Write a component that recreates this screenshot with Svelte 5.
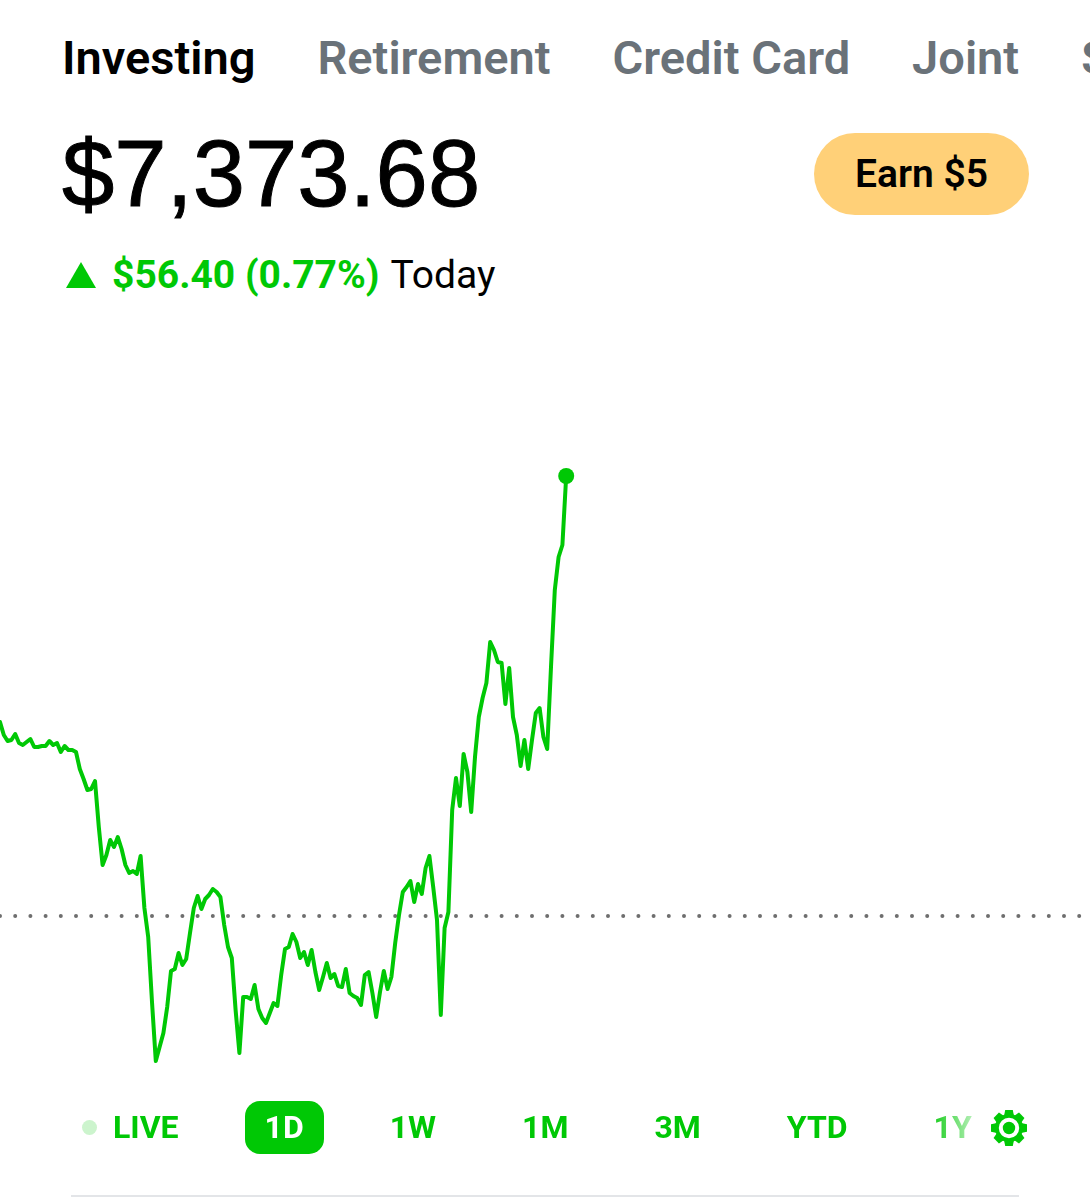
<script lang="ts">
  const accounts = ['Investing', 'Retirement', 'Credit Card', 'Joint', 'Savings'];
  const ranges = ['LIVE', '1D', '1W', '1M', '3M', 'YTD', '1Y'];

  let account = $state('Investing');
  let range = $state('1D');

  // one sample every STEP units, 0 is the top of the chart
  const STEP = 3.8;
  const samples = [
    292, 305, 311, 310, 304, 313, 315, 312, 309, 317, 317, 316, 316, 311, 315, 313, 322, 316, 320, 320,
    322, 339, 349, 360, 359, 351, 397, 435, 425, 410, 417, 407, 419, 435, 443, 441, 444, 426, 478, 507,
    572, 631, 617, 603, 577, 541, 539, 523, 535, 529, 503, 478, 466, 479, 469, 465, 459, 462, 467, 495,
    517, 528, 580, 623, 567, 567, 569, 555, 579, 588, 593, 583, 573, 576, 545, 519, 517, 504, 512, 528,
    522, 535, 520, 542, 560, 547, 533, 548, 544, 556, 557, 539, 563, 566, 568, 575, 545, 542, 563, 587,
    562, 541, 559, 547, 513, 485, 462, 457, 451, 472, 454, 464, 438, 426, 457, 490, 585, 498, 482, 380,
    348, 376, 324, 342, 382, 327, 287, 268, 253, 212, 220, 232, 233, 274, 238, 287, 305, 336, 310, 339,
    310, 283, 278, 307, 319, 237, 160, 127, 115, 46
  ];
  const previousClose = 486;

  const line = samples.map((y, i) => `${(i * STEP).toFixed(1)},${y}`).join(' ');
  const lastX = (samples.length - 1) * STEP;
  const lastY = samples[samples.length - 1];

  const teeth = [0, 45, 90, 135, 180, 225, 270, 315];
</script>

<main>
  <nav class="accounts" aria-label="Accounts">
    {#each accounts as name}
      <button class:current={name === account} onclick={() => (account = name)}>{name}</button>
    {/each}
  </nav>

  <header>
    <h1>$7,373.68</h1>
    <button class="earn">Earn $5</button>
  </header>

  <p class="change">
    <svg width="30" height="26" viewBox="0 0 30 26" aria-hidden="true">
      <path d="M15 0 L30 26 H0 Z" />
    </svg>
    <strong>$56.40 (0.77%)</strong>
    <span>Today</span>
  </p>

  <svg class="chart" viewBox="0 0 1090 640" role="img" aria-label="Portfolio value today">
    <line class="close" x1="0" y1={previousClose} x2="1090" y2={previousClose} />
    <polyline points={line} />
    <circle cx={lastX} cy={lastY} r="8" />
  </svg>

  <div class="toolbar">
    <div class="ranges">
      {#each ranges as name}
        <button class:selected={name === range} onclick={() => (range = name)}>
          {#if name === 'LIVE'}<i class="dot"></i>{/if}{name}
        </button>
      {/each}
    </div>
    <button class="settings" aria-label="Chart settings">
      <svg width="36" height="36" viewBox="-18 -18 36 36" aria-hidden="true">
        {#each teeth as angle}
          <path d="M-5 -12 L-3.8 -18 H3.8 L5 -12 Z" transform="rotate({angle})" />
        {/each}
        <circle r="14" />
        <circle class="ring" r="8.2" />
      </svg>
    </button>
  </div>

  <hr />
</main>

<style>
  :global(body) {
    margin: 0;
    background: #fff;
    color: #000;
    font-family: Roboto, "Liberation Sans", sans-serif;
  }

  main {
    overflow: hidden;
  }

  button {
    padding: 0;
    border: 0;
    background: none;
    color: inherit;
    font: inherit;
    white-space: nowrap;
    cursor: pointer;
  }

  .accounts {
    display: flex;
    gap: 62px;
    padding: 28px 0 0 62px;
    overflow: hidden;
  }

  .accounts button {
    flex: none;
    color: #6a7279;
    font-size: 47px;
    font-weight: 600;
    line-height: 60px;
  }

  .accounts .current {
    color: #000;
  }

  header {
    display: flex;
    align-items: center;
    justify-content: space-between;
    padding: 24px 61px 0 62px;
  }

  h1 {
    margin: 0;
    font-family: "Liberation Sans", Arial, sans-serif;
    font-size: 94px;
    font-weight: 400;
    line-height: 124px;
    -webkit-text-stroke: 1px currentColor;
  }

  .earn {
    padding: 0 41px;
    border-radius: 41px;
    background: #ffd078;
    font-size: 39px;
    font-weight: 600;
    line-height: 82px;
  }

  .change {
    display: flex;
    align-items: center;
    gap: 11px;
    margin: 14px 0 0;
    padding: 0 66px;
    font-size: 39px;
    line-height: 50px;
  }

  .change svg {
    margin-right: 5px;
    fill: #00c805;
  }

  .change strong {
    color: #00c805;
    font-weight: 700;
  }

  .chart {
    display: block;
    width: 100%;
    margin-top: 130px;
  }

  .chart polyline {
    fill: none;
    stroke: #00c805;
    stroke-width: 4;
    stroke-linecap: round;
    stroke-linejoin: round;
  }

  .chart circle {
    fill: #00c805;
  }

  .close {
    stroke: #6e6e6e;
    stroke-width: 4;
    stroke-linecap: round;
    stroke-dasharray: 0 15.2;
  }

  .toolbar {
    display: flex;
    align-items: center;
    margin-top: 31px;
    padding-right: 63px;
    color: #00c805;
  }

  .ranges {
    display: flex;
    flex: 1;
    min-width: 0;
    gap: 46px;
    padding-left: 62px;
    overflow: hidden;
    mask-image: linear-gradient(to left, transparent, #000 64px);
  }

  .ranges button {
    display: flex;
    flex: none;
    align-items: center;
    padding: 0 20px;
    border-radius: 15px;
    font-size: 32px;
    font-weight: 700;
    line-height: 53px;
  }

  .ranges .selected {
    background: #00c805;
    color: #fff;
  }

  .dot {
    width: 15px;
    height: 15px;
    margin-right: 16px;
    border-radius: 50%;
    background: #ccf4cd;
  }

  .settings svg {
    display: block;
    fill: #00c805;
  }

  .ring {
    stroke: #fff;
    stroke-width: 4;
  }

  hr {
    height: 2px;
    margin: 41px 71px 0;
    border: 0;
    background: #e3e5e8;
  }
</style>
